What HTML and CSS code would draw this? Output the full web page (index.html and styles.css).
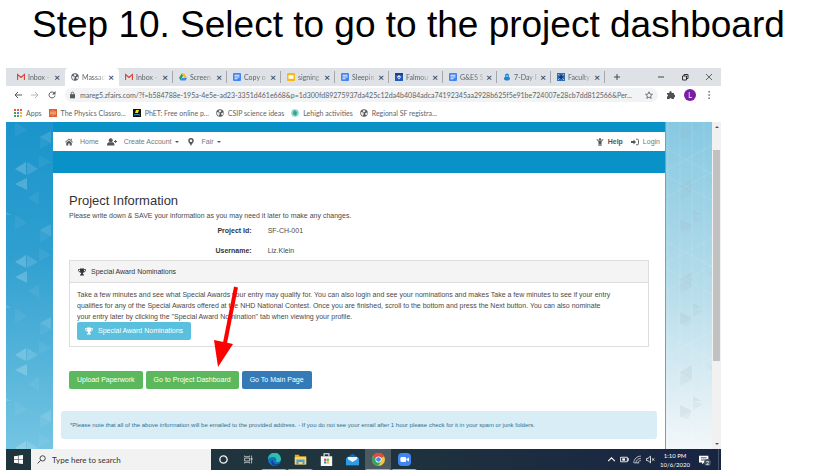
FILE: index.html
```
<!DOCTYPE html>
<html lang="en">
<head>
  <meta charset="UTF-8" />
  <meta name="viewport" content="width=device-width, initial-scale=1.0"/>
  <title>Step 10. Select to go to the project dashboard</title>
  <link rel="stylesheet" href="styles.css">
</head>
<body>
  <svg class="sprite" aria-hidden="true">
    <symbol id="gmail" viewBox="0 0 16 16"><path d="M1 14V3l7 6 7-6v11" fill="none" stroke="#d9483b" stroke-width="2.6"/></symbol>
    <symbol id="globe" viewBox="0 0 16 16"><circle cx="8" cy="8" r="7.5" fill="#565a5e"/><path d="M2 6l4 1 2 3-2 2v2C3 13 1 10 2 6zM7 2l4 1-1 3-3 1-2-3zM11 8l4-1c0 3-1 5-3 6l-2-3z" fill="#e6e8ea"/></symbol>
    <symbol id="drive" viewBox="0 0 16 16"><path d="M5.500 1h5L16 10h-5z" fill="#fbbc05"/><path d="M5.500 1L8 5.500 3 14.500 0 10z" fill="#17a05e"/><path d="M5.500 10H16l-3 5H3z" fill="#4385f5"/></symbol>
    <symbol id="docs" viewBox="0 0 16 16"><rect width="16" height="16" rx="2" fill="#4384f3"/><path d="M3 4.500h10M3 8h10M3 11.500h6" stroke="#fff" stroke-width="1.800"/></symbol>
    <symbol id="slides" viewBox="0 0 16 16"><rect width="16" height="16" rx="2" fill="#f5ba15"/><rect x="3" y="4.500" width="10" height="7" fill="#fff"/></symbol>
    <symbol id="trophy" viewBox="0 0 16 16"><path d="M4 1h8v1.500h4c0 4-2 6-5 6.500-.8 1-1.500 1.500-1.500 3 1.500 0 2.500 1 2.500 3H4c0-2 1-3 2.500-3 0-1.500-.7-2-1.500-3C2 8.500 0 6.500 0 2.500h4zM1.500 4c.3 1.700 1.200 2.800 2.800 3.300L4 4zM12 4l-.3 3.300c1.600-.5 2.500-1.600 2.800-3.300z" fill="currentColor"/></symbol>
  </svg>

  <h1>Step 10. Select to go to the project dashboard</h1>

  <div class="screen">
    <div class="tabs">
      <div class="tab"><svg class="icon"><use href="#gmail"/></svg><span>Inbox -</span><button aria-label="Close tab">×</button></div>
      <div class="tab active"><svg class="icon"><use href="#globe"/></svg><span>Massac</span><button aria-label="Close tab">×</button></div>
      <div class="tab"><svg class="icon"><use href="#gmail"/></svg><span>Inbox -</span><button aria-label="Close tab">×</button></div>
      <div class="tab"><svg class="icon"><use href="#drive"/></svg><span>Screen</span><button aria-label="Close tab">×</button></div>
      <div class="tab"><svg class="icon"><use href="#docs"/></svg><span>Copy o</span><button aria-label="Close tab">×</button></div>
      <div class="tab"><svg class="icon"><use href="#slides"/></svg><span>signing</span><button aria-label="Close tab">×</button></div>
      <div class="tab"><svg class="icon"><use href="#docs"/></svg><span>Sleepin</span><button aria-label="Close tab">×</button></div>
      <div class="tab"><svg class="icon" viewBox="0 0 16 16"><rect width="16" height="16" fill="#2358bd"/><path d="M0 0h16v4H0z" fill="#1a3f96"/><path d="M8 4l4 4-4 5-4-5z" fill="#fff"/><circle cx="8" cy="9" r="1.500" fill="#2358bd"/></svg><span>Falmou</span><button aria-label="Close tab">×</button></div>
      <div class="tab"><svg class="icon"><use href="#docs"/></svg><span>G&amp;ES S</span><button aria-label="Close tab">×</button></div>
      <div class="tab"><svg class="icon" viewBox="0 0 16 16"><circle cx="8" cy="5" r="4" fill="#1a86d0"/><ellipse cx="8" cy="11" rx="6" ry="4" fill="#1a86d0"/><circle cx="8" cy="6" r="1.500" fill="#fff"/></svg><span>7-Day F</span><button aria-label="Close tab">×</button></div>
      <div class="tab"><svg class="icon" viewBox="0 0 16 16"><rect width="16" height="16" fill="#2f6fb5"/><path d="M2 2l4 4M14 2l-4 4M2 14l4-4M14 14l-4-4" stroke="#c5dcf2" stroke-width="1.500"/><circle cx="8" cy="8" r="4" fill="#123c78"/></svg><span>Faculty</span><button aria-label="Close tab">×</button></div>
      <button class="new-tab" aria-label="New tab"><svg viewBox="0 0 8 8"><path d="M4 1v6M1 4h6" stroke="#45494d"/></svg></button>
      <div class="window-buttons">
        <button aria-label="Minimize"><svg viewBox="0 0 8 8"><path d="M1 4h6" stroke="#444"/></svg></button>
        <button aria-label="Restore"><svg viewBox="0 0 8 8"><path d="M1.500 3h4v4h-4zM3 3V1.500h4v4H5.500" fill="none" stroke="#333"/></svg></button>
        <button aria-label="Close"><svg viewBox="0 0 8 8"><path d="M1 1l6 6M7 1L1 7" stroke="#444" stroke-width=".8"/></svg></button>
      </div>
    </div>

    <div class="toolbar">
      <button aria-label="Back"><svg viewBox="0 0 8 8"><path d="M8 4H1M4 1L1 4l3 3" fill="none" stroke="#55595d"/></svg></button>
      <button aria-label="Forward"><svg viewBox="0 0 8 8"><path d="M0 4h7M4 1l3 3-3 3" fill="none" stroke="#b4b7ba"/></svg></button>
      <button aria-label="Reload"><svg viewBox="0 0 8 8"><path d="M6.500 2.200A3 3 0 1 0 7 4.600" fill="none" stroke="#55595d"/><path d="M7.500 0v3.500H4z" fill="#55595d"/></svg></button>
      <div class="address">
        <svg class="lock" viewBox="0 0 6 8"><path d="M0 3h6v5H0z" fill="#55595d"/><path d="M1.500 3V2a1.500 1.500 0 0 1 3 0v1" fill="none" stroke="#55595d"/></svg>
        <input type="text" aria-label="Address" value="mareg5.zfairs.com/?f=b584788e-195a-4e5e-ad23-3351d461e668&amp;p=1d300fd89275937da425c12da4b4084adca74192345aa2928b625f5e91be724007e28cb7dd812566&amp;Per..." />
        <button aria-label="Bookmark"><svg viewBox="0 0 8 8"><path d="M4 .8l1 2.300 2.500.2-1.900 1.600.6 2.500L4 6.100 1.800 7.400l.6-2.500L.5 3.300 3 3.100z" fill="none" stroke="#55595d" stroke-width=".8"/></svg></button>
      </div>
      <button aria-label="Extensions"><svg viewBox="0 0 8 8"><path d="M0 2h2.500a1.200 1.200 0 1 1 2 0H7v2a1.200 1.200 0 1 1 0 2v2H4.600a1 1 0 0 0-2 0H0V5.500a1 1 0 0 0 0-2z" fill="#4d5155"/></svg></button>
      <button class="avatar">L</button>
      <button aria-label="Menu"><svg viewBox="0 0 8 8"><path d="M3.500 0h1.300v1.500H3.500zM3.500 3.200h1.300v1.500H3.500zM3.500 6.400h1.300V8H3.500z" fill="#55595d"/></svg></button>
    </div>

    <div class="bookmarks">
      <a href="#"><svg class="icon" viewBox="0 0 8 8"><path d="M0 0h2v2H0zM3 0h2v2H3zM6 0h2v2H6z" fill="#e2574b"/><path d="M0 3h2v2H0zM0 6h2v2H0zM3 6h2v2H3z" fill="#46a05a"/><path d="M3 3h2v2H3z" fill="#4285f4"/><path d="M6 3h2v2H6zM6 6h2v2H6z" fill="#f2b632"/></svg>Apps</a>
      <a href="#"><svg class="icon" viewBox="0 0 8 8"><rect width="8" height="8" fill="#e2602c"/><path d="M4 1v6M2 2v4M6 2v4M1 4h6" stroke="#f9c3a4" stroke-width=".7"/></svg>The Physics Classro...</a>
      <a href="#"><svg class="icon" viewBox="0 0 8 8"><rect width="8" height="8" fill="#111"/><path d="M1 6q3-1 6 0" stroke="#35a7e0" fill="none"/><path d="M3 1h3L5 4H2z" fill="#f5e21a"/></svg>PhET: Free online p...</a>
      <a href="#"><svg class="icon"><use href="#globe"/></svg>CSIP science ideas</a>
      <a href="#"><svg class="icon" viewBox="0 0 8 8"><circle cx="4" cy="4" r="3.800" fill="#8fd3c8"/><path d="M3 1l3 2-1 4-3-2z" fill="#32a18f"/></svg>Lehigh activities</a>
      <a href="#"><svg class="icon"><use href="#globe"/></svg>Regional SF registra...</a>
    </div>

    <div class="site">
      <div class="side left">
        <svg aria-hidden="true">
          <pattern id="triLeft" width="47" height="93" patternUnits="userSpaceOnUse">
            <g fill="#fff">
              <path d="M9 47l11-7v13zM9 62l12-6v12z" opacity=".2"/>
              <path d="M21 40l11 7-11 6zM0 90l7 4-7 4zM34 15l11-6v12z" opacity=".13"/>
              <path d="M33 33l12 7-12 6zM34 15l11 6-11 6zM9 0l12 8-12 7zM22 76l11-7v14z" opacity=".05"/>
            </g>
          </pattern>
          <rect width="100%" height="100%" fill="url(#triLeft)"/>
        </svg>
      </div>

      <main>
        <div class="banner">
          <nav>
            <a href="#"><svg class="icon" viewBox="0 0 16 16"><path d="M8 1l8 7-1 1.200L8 3.200l-7 6L0 8zM8 5l5.500 4.700V15H9.500v-4h-3v4h-4V9.700zM11.500 1.500h2v4l-2-2z" fill="currentColor"/></svg>Home</a>
            <a href="#"><svg class="icon wide" viewBox="0 0 20 16"><circle cx="7.500" cy="4.500" r="4" fill="currentColor"/><path d="M0 15c0-4 1-6 4-6.500h7c3 .5 4 2.500 4 6.500zM16 4h1.800v2H20v1.800h-2.200V10H16V7.800h-2V6h2z" fill="currentColor"/></svg>Create Account<i class="caret"></i></a>
            <a href="#"><svg class="icon" viewBox="0 0 16 16"><path fill-rule="evenodd" d="M8 0a5.500 5.500 0 0 1 5.500 5.500C13.500 9 10 11 8 16 6 11 2.500 9 2.500 5.500A5.500 5.500 0 0 1 8 0zm0 3a2.500 2.500 0 1 0 0 5 2.500 2.500 0 0 0 0-5z" fill="currentColor"/></svg>Fair<i class="caret"></i></a>
            <a href="#" class="help"><svg class="icon" viewBox="0 0 16 16"><circle cx="8" cy="3" r="2.500" fill="currentColor"/><path d="M2 2l4 4h4l4-4 1 1.500-4 4V16H8.700v-4H7.300v4H5V7.500l-4-4z" fill="currentColor"/></svg>Help</a>
            <a href="#"><svg class="icon" viewBox="0 0 16 16"><path d="M0 6h5V3l5 5-5 5v-3H0z" fill="currentColor"/><path d="M10 2.500h3q2 0 2 2v7q0 2-2 2h-3" fill="none" stroke="currentColor" stroke-width="1.800"/></svg>Login</a>
          </nav>
        </div>

        <div class="content">
          <h2>Project Information</h2>
          <p class="intro">Please write down &amp; SAVE your information as you may need it later to make any changes.</p>
          <dl>
            <dt>Project Id:</dt><dd>SF-CH-001</dd>
            <dt>Username:</dt><dd>Liz.Klein</dd>
          </dl>

          <section class="panel">
            <h3><svg class="icon"><use href="#trophy"/></svg>Special Award Nominations</h3>
            <div class="panel-body">
              <p>Take a few minutes and see what Special Awards your entry may qualify for. You can also login and see your nominations and makes Take a few minutes to see if your entry<br>
              qualifies for any of the Special Awards offered at the NHD National Contest. Once you are finished, scroll to the bottom and press the Next button. You can also nominate<br>
              your entry later by clicking the "Special Award Nomination" tab when viewing your profile.</p>
              <button class="btn info"><svg class="icon"><use href="#trophy"/></svg>Special Award Nominations</button>
            </div>
          </section>

          <div class="actions">
            <button class="btn success">Upload Paperwork</button>
            <div class="pointed">
              <button class="btn success">Go to Project Dashboard</button>
              <svg class="arrow" viewBox="0 0 26 82" aria-hidden="true"><path d="M22 1L11 57" stroke="#f00" stroke-width="4"/><path d="M0 54l19 4L4 81z" fill="#f00"/></svg>
            </div>
            <button class="btn primary">Go To Main Page</button>
          </div>

          <p class="note">*Please note that all of the above information will be emailed to the provided address. - If you do not see your email after 1 hour please check for it in your spam or junk folders.</p>
        </div>
      </main>

      <div class="side right">
        <svg aria-hidden="true">
          <pattern id="triRight" width="47" height="93" patternUnits="userSpaceOnUse">
            <g fill="#9fb4bf">
              <path d="M14 64l12-7v15zM27 88l10 6-10 6zM14 4l12 6-12 6z" opacity=".2"/>
              <path d="M14 64l12 8-12 6zM40 55l7 4v5zM27 0l10 3-10 6zM14 16l12-6-4 8z" opacity=".12"/>
            </g>
            <path d="M2 0v93M14 0v93M26 0v93M38 0v93M-10 54l60-33M-10 21l60 33M-10 81l60-33M-10 48l60 33" stroke="#fff" opacity=".1" fill="none"/>
          </pattern>
          <rect width="100%" height="100%" fill="url(#triRight)"/>
        </svg>
      </div>

      <div class="scrollbar"><i class="up"></i><div class="thumb"></div><i class="down"></i></div>
    </div>

    <div class="taskbar">
      <button aria-label="Start"><svg viewBox="0 0 16 16"><path d="M0 2.200L7 1.200V7.500H0zM8 1l8-1v7.500H8zM0 8.500h7v6.300l-7-1zM8 8.500h8V16l-8-1z" fill="#fff"/></svg></button>
      <label class="search">
        <svg viewBox="0 0 16 16"><circle cx="10" cy="6" r="4.700" fill="none" stroke="#333" stroke-width="1.600"/><path d="M6.500 9.500L1 15" stroke="#333" stroke-width="1.600"/></svg>
        <input type="text" placeholder="Type here to search" aria-label="Type here to search" />
      </label>
      <button aria-label="Cortana"><svg viewBox="0 0 16 16"><circle cx="8" cy="8" r="6.500" fill="none" stroke="#eef1f2" stroke-width="2.400"/></svg></button>
      <button aria-label="Task view"><svg viewBox="0 0 16 16"><path d="M1 1v2h9V1M1 15v-2h9v2M1 5.500h9v5H1zM13.500 1v4M13.500 9v6" fill="none" stroke="#dfe4e6" stroke-width="1.300"/><path d="M12 5.500h3v3h-3z" fill="#dfe4e6"/></svg></button>
      <button class="app open" aria-label="Edge"><svg viewBox="0 0 16 16"><circle cx="8" cy="8" r="8" fill="#1473c8"/><path d="M0 8a8 8 0 0 1 16-1c0 3-2 4-4 4-1.500 0-2.500-.7-2-1.500C11 7 9 5 6.500 5 3.500 5 1 6 0 8z" fill="#2fc1a8"/><path d="M0 8a8 8 0 0 1 11-7C7 0 2 3 0 8z" fill="#2fa9df"/><path d="M6 8c-1 3 2 7 8 5-3 4-10 3-10-2 0-1.500 1-2.500 2-3z" fill="#0d458f"/></svg></button>
      <button class="app open" aria-label="File Explorer"><svg viewBox="0 0 16 16"><path d="M1 2h5l1 2h8v10H1z" fill="#e5a92b"/><path d="M1 5h14v9H1z" fill="#fbd668"/><path d="M3 8h10v6h-2.500v-3h-5v3H3z" fill="#4d9fdb"/></svg></button>
      <button class="app" aria-label="Store"><svg viewBox="0 0 16 16"><path d="M1 4h14v12H1z" fill="#f4f6f7"/><path d="M5 4V1h6v3" fill="none" stroke="#f4f6f7" stroke-width="1.300"/><path d="M5 7h2.700v2.700H5z" fill="#e0492c"/><path d="M8.300 7H11v2.700H8.300z" fill="#73b533"/><path d="M5 10.300h2.700V13H5z" fill="#2a94d8"/><path d="M8.300 10.300H11V13H8.300z" fill="#f2b21c"/></svg></button>
      <button class="app" aria-label="Mail"><svg viewBox="0 0 16 16"><path d="M0 6l8-5 8 5v9H0z" fill="#1768b4"/><path d="M2 5h12v5l-6 3-6-3z" fill="#f2f6fa"/><path d="M0 6l8 5 8-5v9H0z" fill="#2e9be6"/></svg></button>
      <button class="app open current" aria-label="Chrome"><svg viewBox="0 0 16 16"><circle cx="8" cy="8" r="8" fill="#f7c52e"/><path d="M8 8L1 4a8 8 0 0 1 14 0z" fill="#de4a3c"/><path d="M8 8L1 4a8 8 0 0 0 6.500 12l4-6z" fill="#3ba35b"/><circle cx="8" cy="8" r="3.800" fill="#fff"/><circle cx="8" cy="8" r="2.900" fill="#4486f0"/></svg></button>
      <button class="app open" aria-label="Zoom"><svg viewBox="0 0 16 16"><rect width="16" height="16" rx="5" fill="#3f86f2"/><rect x="3" y="5" width="7" height="6" rx="1.500" fill="#fff"/><path d="M10.500 7.500L13.500 5.500v5l-3-2z" fill="#fff"/></svg></button>
      <div class="tray">
        <svg viewBox="0 0 16 16"><path d="M2 11l6-6 6 6" fill="none" stroke="#fff" stroke-width="1.800"/></svg>
        <svg viewBox="0 0 16 16"><path d="M1 4h12v8H1zM13 6.500h2.500v3H13" fill="none" stroke="#fff" stroke-width="1.500"/><path d="M4 6h5v4H4z" fill="#fff"/></svg>
        <svg viewBox="0 0 16 16"><path d="M1 14C2 7 7 2 14 2M5 14c.5-4 4-8 9-8M9 14c0-2 2-4 5-4M2 14h9" fill="none" stroke="#cdd3dc" stroke-width="1.500"/></svg>
        <svg viewBox="0 0 16 16"><path d="M1 6h2.500L8 2v12l-4.500-4H1zM10.500 6l4.500 4M15 6l-4.500 4" fill="none" stroke="#fff" stroke-width="1.400"/></svg>
        <time>1:10 PM<br>10/6/2020</time>
        <div class="notice">
          <svg viewBox="0 0 16 16"><path d="M0 1h15v11H8l-3 3v-3H0z" fill="#fff"/><path d="M3 4.500h9M3 8h9" stroke="#1b2a42" stroke-width="1.300"/></svg>
          <span>2</span>
        </div>
      </div>
    </div>
  </div>
</body>
</html>
```
FILE: styles.css
```
* {
  box-sizing: border-box;
}
body {
  margin: 0;
  background: #fff;
  font-family: "Liberation Sans", Arial, sans-serif;
  font-size: 7px;
  line-height: 10px;
  color: #4a4a4a;
}
h1, h2, h3, p, dl, dd {
  margin: 0;
  font-weight: normal;
}
a {
  color: inherit;
  text-decoration: none;
}
button {
  border: none;
  padding: 0;
  background: none;
  font: inherit;
  color: inherit;
  display: flex;
  align-items: center;
  justify-content: center;
  cursor: pointer;
}
input {
  border: none;
  padding: 0;
  background: none;
  font: inherit;
  color: inherit;
  min-width: 0;
  outline: none;
}
svg {
  display: block;
}
.sprite {
  position: absolute;
  width: 0;
  height: 0;
}
.icon {
  width: 8px;
  height: 8px;
  flex: none;
}
h1 {
  padding: 2px 0 20px 32px;
  font-size: 37px;
  line-height: 46px;
  color: #000;
  white-space: nowrap;
}
.screen {
  margin: 0 92px 0 6px;
}

/* browser chrome */
.tabs, .toolbar, .bookmarks {
  display: flex;
  align-items: center;
  font-family: Lato, "Open Sans", sans-serif;
  color: #5f6368;
}
.tabs {
  height: 18px;
  padding-left: 5px;
  background: #dee1e6;
}
.tab {
  flex: 0 1 54px;
  min-width: 0;
  height: 12px;
  padding: 0 4px 0 6px;
  display: flex;
  align-items: center;
  gap: 3px;
  border-right: 1px solid #a3a7ad;
}
.tab span {
  flex: 1;
  overflow: hidden;
  white-space: nowrap;
  -webkit-mask-image: linear-gradient(90deg, #000 60%, rgba(0,0,0,0.2));
  mask-image: linear-gradient(90deg, #000 60%, rgba(0,0,0,0.2));
}
.tab button {
  font-size: 10px;
  font-weight: 600;
  color: #3c4043;
}
.tab:first-child {
  border-color: transparent;
}
.tab.active {
  height: 18px;
  background: #fff;
  border-color: transparent;
  border-radius: 4px 4px 0 0;
}
.new-tab {
  margin-left: 8px;
}
.tabs > button svg, .window-buttons svg, .toolbar svg {
  width: 8px;
  height: 8px;
}
.window-buttons {
  margin-left: auto;
  padding-right: 8px;
  display: flex;
  gap: 16px;
}
.toolbar {
  height: 18px;
  padding: 0 8px;
  gap: 9px;
}
.address {
  flex: 1;
  height: 14px;
  padding: 0 5px;
  display: flex;
  align-items: center;
  gap: 5px;
  border-radius: 7px;
  background: #f1f3f4;
}
.toolbar .lock {
  width: 5px;
}
.address input {
  flex: 1;
}
.avatar {
  width: 12px;
  height: 12px;
  border-radius: 50%;
  background: #7b1fa2;
  color: #fff;
}
.bookmarks {
  height: 18px;
  padding: 0 8px;
  gap: 7px;
  white-space: nowrap;
}
.bookmarks a {
  display: flex;
  align-items: center;
  gap: 4px;
}

/* project page */
.site {
  display: grid;
  grid-template-columns: 47px 1fr 47px 9px;
}
.side {
  position: relative;
}
.side svg {
  position: absolute;
  width: 100%;
  height: 100%;
}
.left {
  background: linear-gradient(#1a94cb, #2f9fd0 40%, #74c5e2);
}
.right {
  background: linear-gradient(#86c9e2, #b5dcea 50%, #f2f7f9);
  border-left: 1px solid #4fb0d0;
}
.banner {
  padding: 10px 0 22px;
  background: #0892c8;
}
nav {
  height: 19px;
  padding: 0 5px 0 12px;
  display: flex;
  align-items: center;
  gap: 8px;
  background: #fff;
  color: #777;
}
nav a {
  display: flex;
  align-items: center;
  gap: 7px;
}
nav svg {
  color: #555;
}
.wide {
  width: 10px;
}
.caret {
  margin-left: -4px;
  border: 2px solid transparent;
  border-top-color: #555;
  border-bottom: 0;
}
.help {
  margin-left: auto;
  font-weight: bold;
  color: #555;
}
nav .help, .help + a {
  gap: 4px;
}
.content {
  padding: 18px 8px 10px;
}
h2, .intro {
  padding: 0 8px;
}
h2 {
  font-size: 13px;
  line-height: 20px;
  color: #333;
}
dl {
  padding: 5px 0 4px;
  display: grid;
  grid-template-columns: 1fr 2fr;
  row-gap: 10px;
}
dt, dd {
  padding: 0 8px;
}
dt {
  text-align: right;
  font-weight: bold;
  color: #333;
}
.panel {
  margin: 0 8px;
  border: 1px solid #ddd;
}
h3 {
  height: 22px;
  padding: 0 8px;
  display: flex;
  align-items: center;
  gap: 5px;
  font-size: 7px;
  color: #333;
  background: #f4f4f4;
  border-bottom: 1px solid #ddd;
}
.panel-body {
  padding: 6px 7px;
}
.panel-body p {
  line-height: 11px;
}
.btn {
  height: 18px;
  padding: 0 8px;
  gap: 5px;
  border-radius: 2px;
  color: #fff;
  white-space: nowrap;
}
.info {
  background: #5bc0de;
}
.success {
  background: #5cb85c;
}
.primary {
  background: #337ab7;
}
.actions {
  padding: 24px 8px 22px;
  display: flex;
  gap: 3px;
}
.pointed {
  position: relative;
}
.arrow {
  position: absolute;
  left: 68px;
  bottom: 21px;
  width: 26px;
  height: 82px;
}
.note {
  padding: 9px;
  border-radius: 3px;
  background: #d9edf7;
  color: #31708f;
  font-size: 6px;
}
.scrollbar {
  padding: 4px 1px;
  display: flex;
  flex-direction: column;
  align-items: center;
  background: #f1f1f1;
}
.up, .down {
  border: 2px solid transparent;
}
.up {
  border-top: 0;
  border-bottom-color: #555;
}
.down {
  border-bottom: 0;
  border-top-color: #555;
}
.thumb {
  width: 100%;
  flex: 0 0 66%;
  margin: 22px 0 auto;
  background: #c1c1c1;
}

/* windows taskbar */
.taskbar {
  height: 21px;
  display: flex;
  align-items: stretch;
  background: linear-gradient(90deg, #1f343d 50%, #182443);
  color: #fff;
  font-family: Lato, "Open Sans", sans-serif;
}
.taskbar > button {
  width: 25px;
}
.taskbar svg {
  width: 9px;
  height: 9px;
}
.search {
  width: 180px;
  padding-left: 6px;
  display: flex;
  align-items: center;
  gap: 6px;
  background: #f2f2f2;
  color: #333;
  font-size: 8px;
}
.search input {
  flex: 1;
}
.search input::placeholder {
  color: #333;
}
.taskbar .app {
  width: 26px;
  border: solid transparent;
  border-width: 1px 2px;
}
.taskbar .app svg {
  width: 13px;
  height: 13px;
}
.taskbar .open {
  border-bottom-color: #76b9ed;
}
.taskbar .current {
  background: #4b5a63;
}
.tray {
  margin-left: auto;
  margin-right: 2px;
  padding-right: 9px;
  border-right: 1px solid #46536b;
  display: flex;
  align-items: center;
  gap: 4px;
}
.tray time {
  width: 36px;
  padding-right: 4px;
  text-align: center;
  line-height: 9px;
  font-size: 6px;
}
.notice {
  position: relative;
}
.tray .notice svg {
  width: 10px;
  height: 10px;
}
.notice span {
  position: absolute;
  left: 5px;
  top: 4px;
  width: 7px;
  height: 7px;
  border-radius: 50%;
  background: #444f60;
  font-size: 6px;
  line-height: 7px;
  text-align: center;
}
```
